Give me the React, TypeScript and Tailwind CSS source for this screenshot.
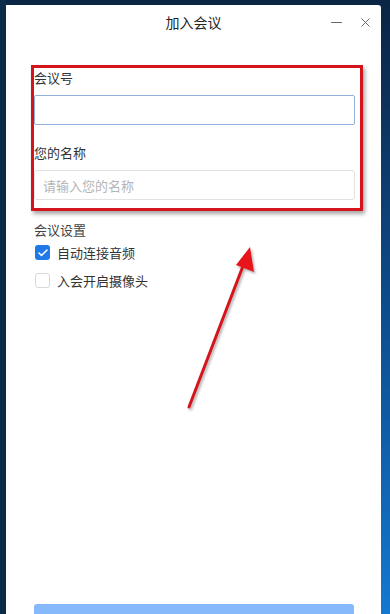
import { Check, Minus, X } from "lucide-react";

const font = { fontFamily: '"Microsoft YaHei", "Noto Sans CJK SC", "Noto Sans", sans-serif' };

function Checkbox({ checked, label }: { checked: boolean; label: string }) {
  return (
    <label className="flex items-center gap-[7px]">
      {checked ? (
        <span className="flex h-[15px] w-[15px] items-center justify-center rounded-[3px] bg-[#1f7ae8]">
          <Check size={12} strokeWidth={3} className="text-white" />
        </span>
      ) : (
        <span className="h-[15px] w-[15px] rounded-[3px] border border-[#d8d8d8] bg-white" />
      )}
      <span className="text-[13px] text-[#333]">{label}</span>
    </label>
  );
}

export default function App() {
  return (
    <div
      className="relative h-[614px] w-[390px] overflow-hidden bg-gradient-to-b from-[#0a2544] via-[#0d4c8c] to-[#1478d0] pl-[6px] pt-[5px]"
      style={font}
    >
      {/* dark left edge of the desktop */}
      <div className="absolute left-0 top-0 h-full w-[6px] bg-[#0b2c48]" />
      <div className="relative flex h-[609px] w-[375px] flex-col rounded-tr-[3px] bg-white">
        {/* title bar */}
        <div className="relative flex h-[34px] items-center justify-center">
          <span className="text-[14px] text-[#222]">加入会议</span>
          <div className="absolute right-[8px] top-[9px] flex items-center gap-[13px] text-[#666]">
            <Minus size={17} strokeWidth={1.6} />
            <X size={15} strokeWidth={1.6} />
          </div>
        </div>

        <div className="flex flex-1 flex-col px-[28px]">
          <div className="mt-[30px] text-[13px] leading-[18px] text-[#333]">会议号</div>
          <input
            className="mt-[8px] h-[30px] w-[321px] rounded-[2px] border border-[#8fb2d8] px-2 text-[13px] outline-none"
            defaultValue=""
          />
          <div className="mt-[19px] text-[13px] leading-[18px] text-[#333]">您的名称</div>
          <input
            className="mt-[8px] h-[30px] w-[321px] rounded-[3px] border border-[#e2e2e2] px-[8px] text-[13px] outline-none placeholder:text-[#b5b5b5]"
            placeholder="请输入您的名称"
          />

          <div className="mt-[21px] text-[13px] leading-[18px] text-[#444]">会议设置</div>
          <div className="mt-[4px] flex flex-col gap-[8px] pl-[1px]">
            <Checkbox checked label="自动连接音频" />
            <Checkbox checked={false} label="入会开启摄像头" />
          </div>

          <div className="mt-auto h-[10px] w-[320px] rounded-t-[3px] bg-[#86b9fb]" />
        </div>
      </div>

      {/* annotation: red box and arrow */}
      <div className="pointer-events-none absolute left-[31px] top-[65px] h-[146px] w-[332px] border-[3px] border-[#d3141c] shadow-[2px_3px_4px_rgba(0,0,0,0.35)]" />
      <svg className="pointer-events-none absolute left-0 top-0" width="390" height="614">
        <defs>
          <filter id="sh" x="-50%" y="-50%" width="200%" height="200%">
            <feDropShadow dx="1.5" dy="2" stdDeviation="1.2" floodColor="#000" floodOpacity="0.3" />
          </filter>
        </defs>
        <g filter="url(#sh)">
          <line x1="189" y1="407" x2="243" y2="266" stroke="#d3141c" strokeWidth="3" strokeLinecap="round" />
          <polygon points="250,247 254,272 236,265" fill="#e8141c" />
        </g>
      </svg>
    </div>
  );
}
